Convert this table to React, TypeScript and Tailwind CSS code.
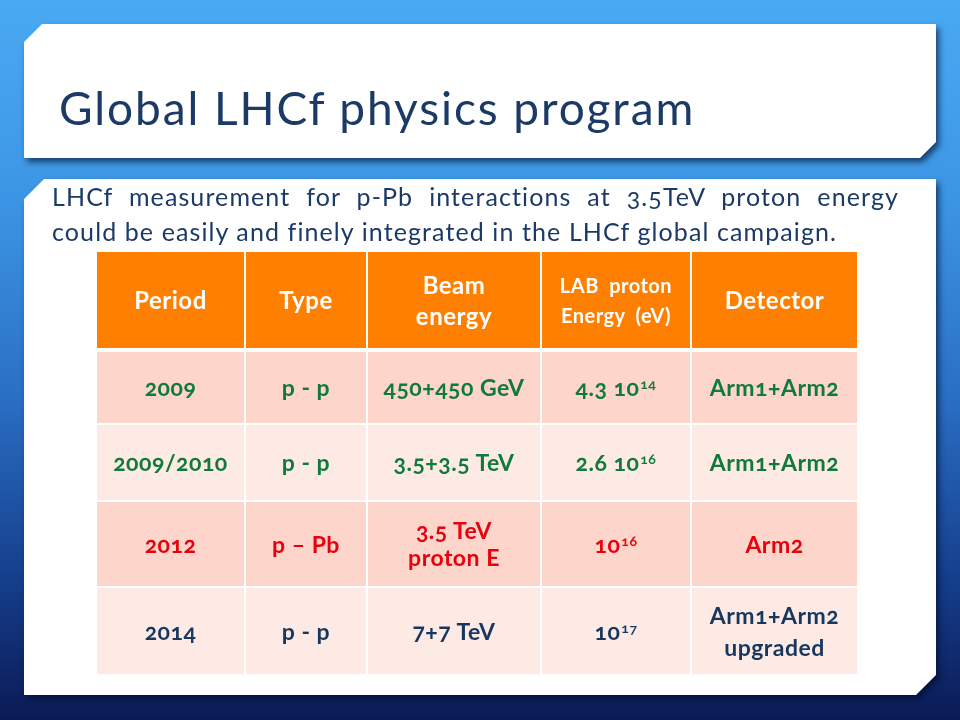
import React from 'react';

type Row = {
  cells: React.ReactNode[];
  tone: 'dark' | 'light';
  color: string;
  height: string;
};

const cols = ['w-[147px]', 'w-[120px]', 'w-[172px]', 'w-[148px]', 'w-[165px]'];

const Pow = ({ pre, base, exp }: { pre?: string; base: string; exp: string }) => (
  <span>
    {pre ? `${pre}\u00a0` : ''}
    {base}
    <sup className="text-[14px] ml-[1px]">{exp}</sup>
  </span>
);

const rows: Row[] = [
  {
    cells: ['2009', 'p - p', '450+450 GeV', <Pow pre="4.3" base="10" exp="14" />, 'Arm1+Arm2'],
    tone: 'dark',
    color: 'text-[#0f7a3c]',
    height: 'h-[71px]',
  },
  {
    cells: ['2009/2010', 'p - p', '3.5+3.5 TeV', <Pow pre="2.6" base="10" exp="16" />, 'Arm1+Arm2'],
    tone: 'light',
    color: 'text-[#0f7a3c]',
    height: 'h-[75px]',
  },
  {
    cells: [
      '2012',
      'p – Pb',
      <span className="leading-[27px]">3.5 TeV<br />proton E</span>,
      <Pow base="10" exp="16" />,
      'Arm2',
    ],
    tone: 'dark',
    color: 'text-[#e8000c]',
    height: 'h-[84px]',
  },
  {
    cells: [
      '2014',
      'p - p',
      '7+7 TeV',
      <Pow base="10" exp="17" />,
      <span className="leading-[32px]">Arm1+Arm2<br />upgraded</span>,
    ],
    tone: 'light',
    color: 'text-[#17375e]',
    height: 'h-[86px]',
  },
];

export default function App() {
  return (
    <div className="w-[960px] h-[720px] overflow-hidden bg-[linear-gradient(180deg,#4aa9f3_0%,#3c95e4_28%,#2a6fc4_55%,#153f8c_80%,#0b1a55_100%)] pt-[24px] px-[24px] font-['Lato','Liberation_Sans',sans-serif]">
      {/* title box */}
      <div className="drop-shadow-[3px_4px_3px_rgba(0,12,45,0.65)]">
        <div className="h-[134px] bg-white flex items-end pl-[35px] pb-[27px] [clip-path:polygon(18px_0,100%_0,100%_calc(100%_-_16px),calc(100%_-_16px)_100%,0_100%,0_18px)]">
          <h1 className="text-[46px] leading-none tracking-[1.9px] text-[#1b3a66]">Global LHCf physics program</h1>
        </div>
      </div>

      {/* content box */}
      <div className="mt-[21px] drop-shadow-[3px_4px_3px_rgba(0,12,45,0.65)]">
        <div className="h-[516px] bg-white pl-[28px] pr-[37px] [clip-path:polygon(20px_0,100%_0,100%_calc(100%_-_20px),calc(100%_-_20px)_100%,0_100%,0_20px)]">
          <div className="text-[25px] leading-[35px] tracking-[1.1px] text-[#1b3a66] [font-variant-numeric:oldstyle-nums]">
            <p className="text-justify [text-align-last:justify]">
              LHCf measurement for p-Pb interactions at 3.5TeV proton energy
            </p>
            <p>could be easily and finely integrated in the LHCf global campaign.</p>
          </div>

          <div className="mt-[3px] ml-[45px] w-[760px] flex flex-col gap-[2px] font-bold tracking-[0.5px] [font-variant-numeric:oldstyle-nums]">
            <div className="flex gap-[2px] h-[96px] mb-[2px] text-white text-[24px]">
              <div className={`${cols[0]} bg-[#ff8000] flex items-center justify-center`}>Period</div>
              <div className={`${cols[1]} bg-[#ff8000] flex items-center justify-center`}>Type</div>
              <div className={`${cols[2]} bg-[#ff8000] flex items-center justify-center text-center leading-[31px]`}>
                Beam<br />energy
              </div>
              <div className={`${cols[3]} bg-[#ff8000] flex items-center justify-center text-center text-[20px] leading-[30px] [word-spacing:5px]`}>
                LAB proton<br />Energy (eV)
              </div>
              <div className={`${cols[4]} bg-[#ff8000] flex items-center justify-center`}>Detector</div>
            </div>

            {rows.map((row, i) => (
              <div key={i} className={`flex gap-[2px] ${row.height} ${row.color} text-[23px]`}>
                {row.cells.map((cell, j) => (
                  <div
                    key={j}
                    className={`${cols[j]} ${row.tone === 'dark' ? 'bg-[#fdd5cb]' : 'bg-[#fdeae5]'} flex items-center justify-center text-center`}
                  >
                    {cell}
                  </div>
                ))}
              </div>
            ))}
          </div>
        </div>
      </div>
    </div>
  );
}
